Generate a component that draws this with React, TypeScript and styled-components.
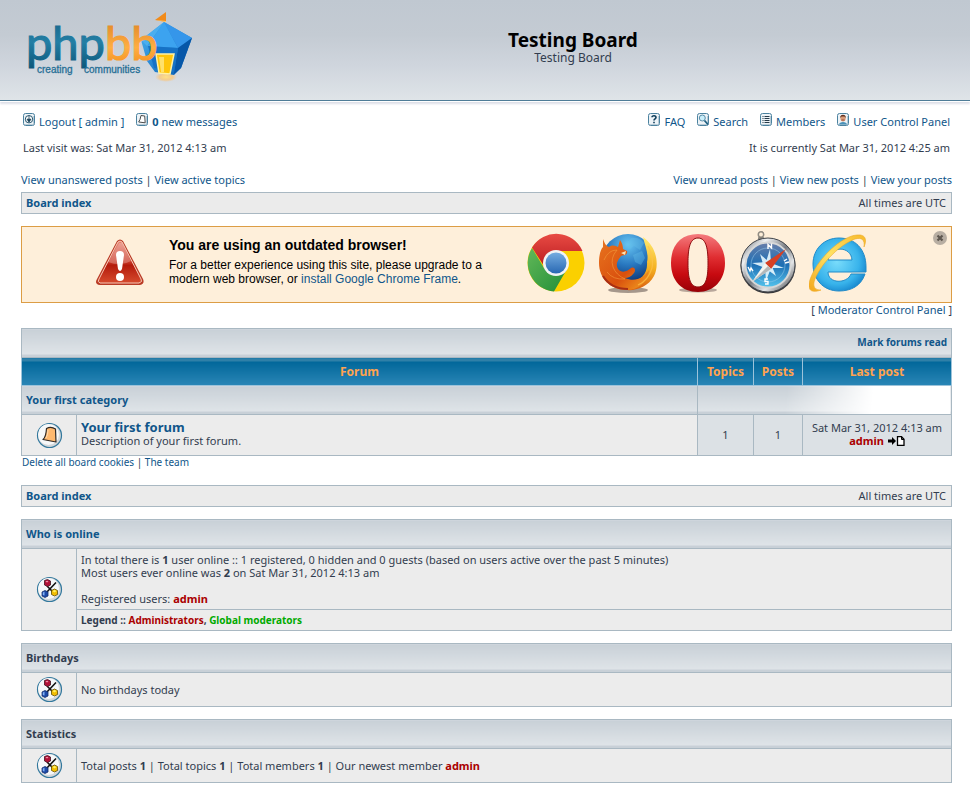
import React from "react";
import styled, { createGlobalStyle, css } from "styled-components";

const LINE = "#a9b8c2";
const LINK = "#10568a";

const GlobalStyle = createGlobalStyle`
  * { box-sizing: border-box; }
  body {
    margin: 0;
    background: #fff;
    color: #323d4f;
    font-family: "Noto Sans", "Open Sans", sans-serif;
    font-size: 11px;
    line-height: 13px;
  }
  h1, h2, p { margin: 0; }
  svg { display: block; flex: none; }
`;

const Header = styled.header`
  display: flex;
  align-items: center;
  height: 101px;
  padding: 0 18px 4px 26px;
  background: linear-gradient(#c0c8d1, #c4cbd3 35%, #cfd5dd 65%, #dfe4e8);
  border-bottom: 1px solid #4f7d98;
  box-shadow: 0 1px 0 #fff, 0 3px 2px #dddfe8;
`;

const TitleBlock = styled.div`
  flex: 1;
  text-align: center;
`;

const BoardTitle = styled.h1`
  color: #000;
  font-size: 19px;
  line-height: 20px;
`;

const BoardDescription = styled.p`
  font-size: 12px;
  line-height: 16px;
`;

const Content = styled.main`
  padding: 13px 18px 0 21px;
`;

const Row = styled.div<{ $inset?: boolean }>`
  display: flex;
  justify-content: space-between;
  line-height: 16px;
  padding: ${(p) => (p.$inset ? "0 2px" : "0")};
`;

const DateRow = styled(Row)`
  margin: 10px 0 16px;
`;

const SearchRow = styled(Row)`
  margin-bottom: 4px;
`;

const ModeratorRow = styled(Row)`
  justify-content: flex-end;
  line-height: 14px;
`;

const Link = styled.a<{ $strong?: boolean; $color?: string }>`
  color: ${(p) => p.$color ?? LINK};
  font-weight: ${(p) => (p.$strong ? 700 : "inherit")};
  text-decoration: none;
  &:hover { text-decoration: underline; }
`;

const MenuGroup = styled.nav`
  display: flex;
  gap: 12px;
`;

const MenuLink = styled(Link)`
  display: flex;
  gap: 4px;
  svg { margin-top: -1px; }
`;

const Breadcrumb = styled.div`
  display: flex;
  justify-content: space-between;
  align-items: center;
  height: 22px;
  padding: 0 5px 2px 4px;
  border: 1px solid ${LINE};
  background: #ebebeb;
`;

const Banner = styled.aside`
  position: relative;
  display: flex;
  align-items: center;
  margin-top: 12px;
  height: 77px;
  padding: 0 0 4px 73px;
  border: 1px solid #dc9d45;
  background: #feefda;
  color: #000;
  font-family: "Liberation Sans", Arial, sans-serif;
`;

const BannerText = styled.div`
  flex: none;
  width: 382px;
  padding: 0 0 2px 24px;
  font-size: 12px;
  line-height: 14px;
`;

const BannerTitle = styled.h2`
  font-size: 14px;
  line-height: 16px;
  margin-bottom: 5px;
`;

const BannerMessage = styled.p`
  width: 324px;
`;

const Browsers = styled.div`
  display: flex;
  align-items: center;
  gap: 13px;
`;

const BrowserLink = styled.a`
  display: block;
`;

const CloseButton = styled.button`
  position: absolute;
  top: 4px;
  right: 4px;
  padding: 0;
  border: 0;
  background: none;
  cursor: pointer;
`;

const Table = styled.table`
  width: 100%;
  table-layout: fixed;
  border-collapse: collapse;
  border: 1px solid ${LINE};
`;

const ForumTable = styled(Table)`
  margin-top: 11px;
`;

const InfoTable = styled(Table)`
  margin-top: 12px;
`;

const Col = styled.col<{ $w?: number }>`
  width: ${(p) => (p.$w ? `${p.$w}px` : "auto")};
`;

const Tr = styled.tr<{ $h: number }>`
  height: ${(p) => p.$h}px;
`;

const barFill = css`
  background: linear-gradient(to top, #c8d0d7 3px, transparent 3px),
    linear-gradient(#c8d0d7, #dfe4e8 90%);
`;

const Bar = styled.th<{ $align?: string; $size?: number }>`
  ${barFill}
  padding: 0 4px 2px;
  border: 1px solid ${LINE};
  text-align: ${(p) => p.$align ?? "left"};
  font-size: ${(p) => p.$size ?? 11}px;
`;

const BarFade = styled.td`
  border: 1px solid ${LINE};
  background: linear-gradient(95deg, transparent 35%, #fff 69%),
    linear-gradient(to top, #c8d0d7 3px, transparent 3px),
    linear-gradient(#c8d0d7, #dfe4e8 90%);
`;

const ColumnHead = styled.th`
  padding: 0;
  border: 1px solid #9cc3da;
  border-top-color: ${LINE};
  background: linear-gradient(#2f80a8 3px, transparent 3px),
    linear-gradient(#006699 10%, #2a86b6);
  color: #ffa34f;
  font-size: 12px;
`;

const Cell = styled.td<{ $shade?: boolean; $center?: boolean }>`
  padding: 0 4px;
  border: 1px solid ${LINE};
  background: ${(p) => (p.$shade ? "#dce1e5" : "#ececec")};
  text-align: ${(p) => (p.$center ? "center" : "left")};
  white-space: nowrap;
  > svg { margin: 0 auto; }
`;

const ForumCell = styled(Cell)`
  padding-bottom: 4px;
`;

const CountCell = styled(Cell)`
  padding-bottom: 2px;
`;

const LegendCell = styled(Cell)`
  font-size: 10px;
  font-weight: 700;
`;

const ForumLink = styled(Link)`
  font-size: 13px;
  line-height: 14px;
`;

const LastPoster = styled.div`
  display: flex;
  justify-content: center;
  align-items: center;
  gap: 4px;
`;

const BottomRow = styled.div`
  margin-bottom: 16px;
  padding-left: 1px;
  font-size: 10px;
  line-height: 13px;
`;

const Logo = () => (
  <svg width="168" height="74" viewBox="26 11 168 74" role="img" aria-label="phpBB creating communities">
    <defs>
      <linearGradient id="lgBlue" x1="0" y1="0" x2="0" y2="1">
        <stop offset="0" stopColor="#175f82" />
        <stop offset=".5" stopColor="#237fa5" />
        <stop offset="1" stopColor="#0b5578" />
      </linearGradient>
      <linearGradient id="lgOrange" x1="0" y1="0" x2="0" y2="1">
        <stop offset="0" stopColor="#d87d20" />
        <stop offset=".6" stopColor="#ffae43" />
        <stop offset="1" stopColor="#f18a16" />
      </linearGradient>
      <linearGradient id="lgBody" x1="0" y1="0" x2="1" y2="1">
        <stop offset="0" stopColor="#4cb6f5" />
        <stop offset="1" stopColor="#055aaf" />
      </linearGradient>
      <radialGradient id="lgGlow">
        <stop offset="0" stopColor="#ffe184" />
        <stop offset=".6" stopColor="#f9c87e" stopOpacity=".8" />
        <stop offset="1" stopColor="#f3c78c" stopOpacity="0" />
      </radialGradient>
    </defs>
    <ellipse cx="166" cy="77" rx="11" ry="5" fill="url(#lgGlow)" />
    <path d="M155 20 166 12 166 22Z" fill="#f18b1a" />
    <path d="M155 20 166 21 166 22Z" fill="#ffcb72" />
    <path d="M141 40 164 22 192 38 181 68 174 75 155 72 147 61Z" fill="url(#lgBody)" />
    <path d="M164 22 147 46 141 40Z" fill="#4aaef0" />
    <path d="M164 22 148 46 178 48Z" fill="#3ca3f0" />
    <path d="M164 22 192 38 178 48Z" fill="#3596ea" />
    <path d="M192 38 178 48 174 74 181 68Z" fill="#0757a8" />
    <path d="M148 46 178 48 174 72 154 68Z" fill="#1672c6" />
    <path d="M156 54H174L170 74 159 73Z" fill="#ffc50b" stroke="#fff2a6" strokeWidth="1.5" />
    <path d="M159 57H164L164 72 161 72Z" fill="#ffe16b" />
    <text x="26" y="60" fontFamily="Lato, sans-serif" fontSize="47" strokeWidth="1.2">
      <tspan fill="url(#lgBlue)" stroke="url(#lgBlue)">php</tspan>
      <tspan fill="url(#lgOrange)" stroke="url(#lgOrange)">bb</tspan>
    </text>
    <g fontFamily="'Liberation Sans', Arial, sans-serif" fontSize="10" fill="#266f96" stroke="#266f96" strokeWidth=".3">
      <text x="37" y="73">creating</text>
      <text x="84" y="73">communities</text>
    </g>
  </svg>
);

const MenuIcon = ({ children }: { children: React.ReactNode }) => (
  <svg width="12" height="13" viewBox="0 0 12 13" aria-hidden="true">
    <rect x=".5" y=".5" width="11" height="12" rx="2" fill="#edf3f7" stroke="#4b829f" />
    <path d="M2 11.5H10M10.5 3V11" stroke="#b8cbd7" />
    {children}
  </svg>
);

const LogoutIcon = () => (
  <MenuIcon>
    <circle cx="6" cy="6.2" r="3.7" fill="#fff" stroke="#25546c" />
    <path d="M6 3V7M4 6.2H8L6 9Z" fill="#163f57" stroke="#163f57" strokeWidth=".8" />
  </MenuIcon>
);
const MessageIcon = () => (
  <MenuIcon>
    <path d="M5 2.5 8.7 3 9.2 9.8 2.7 9 4 6.5Z" fill="#fff" stroke="#4b4b4b" strokeLinejoin="round" />
  </MenuIcon>
);
const FaqIcon = () => (
  <MenuIcon>
    <path d="M4 4.2C4 2.3 8 2.3 8 4.5 8 6 6 5.8 6 7.6M6 8.8V10.2" fill="none" stroke="#103f5c" strokeWidth="1.6" />
  </MenuIcon>
);
const SearchIcon = () => (
  <MenuIcon>
    <circle cx="5.3" cy="5" r="3" fill="#c9eefa" stroke="#5b8ea9" />
    <path d="M7.5 7.5 11 11.5" stroke="#1e5f80" strokeWidth="1.8" />
  </MenuIcon>
);
const MembersIcon = () => (
  <MenuIcon>
    <path d="M2.5 3.5H3.5M4.5 3.5H9.5M2.5 5.5H3.5M4.5 5.5H9.5M2.5 7.5H3.5M4.5 7.5H9.5M2.5 9.5H3.5M4.5 9.5H9.5" stroke="#263b49" />
  </MenuIcon>
);
const UserIcon = () => (
  <MenuIcon>
    <path d="M2 11.5C2 8 10 8 10 11.5Z" fill="#4a91b8" />
    <ellipse cx="6" cy="5.3" rx="2.6" ry="3.2" fill="#d89b78" />
    <path d="M3.2 5C2.8 .8 9.2 .8 8.8 5L7.5 3.5H4.5Z" fill="#623220" />
    <path d="M4.5 7H7.5" stroke="#9b4d3b" />
  </MenuIcon>
);

const WarningIcon = () => (
  <svg width="50" height="47" viewBox="0 0 50 47" role="img" aria-label="Warning">
    <defs>
      <linearGradient id="warn" x1="0" y1="0" x2="0" y2="1">
        <stop offset="0" stopColor="#e88473" />
        <stop offset=".5" stopColor="#c83827" />
        <stop offset=".58" stopColor="#b41b0c" />
        <stop offset="1" stopColor="#d64a2d" />
      </linearGradient>
    </defs>
    <path d="M22 2Q25-1 28 2L48 40Q50 45 45 46H5Q-1 45 2 40Z" fill="#b93a25" />
    <path d="M23 3Q25 1 27 3L46 40Q48 43 44 44H5Q2 43 4 40Z" fill="url(#warn)" stroke="#f6c9b7" />
    <path d="M24 4 13 23Q26 28 36 22L27 4Z" fill="#fff" opacity=".25" />
    <path d="M21 16Q21 12 25 12T29 16L27 30Q25 34 23 30Z" fill="#fff" />
    <circle cx="25" cy="38" r="4" fill="#fff" />
  </svg>
);

const ChromeIcon = () => (
  <svg width="58" height="60" viewBox="0 0 58 60" role="img" aria-label="Google Chrome">
    <defs>
      <linearGradient id="chR" x1="0" y1="0" x2="0" y2="1"><stop stopColor="#e84a43" /><stop offset="1" stopColor="#bc1e22" /></linearGradient>
      <linearGradient id="chG" x1="0" y1="0" x2="1" y2="1"><stop stopColor="#62b858" /><stop offset="1" stopColor="#218e38" /></linearGradient>
      <linearGradient id="chB" x1="0" y1="0" x2="0" y2="1"><stop stopColor="#75ace0" /><stop offset="1" stopColor="#2868b3" /></linearGradient>
    </defs>
    <circle cx="29" cy="30" r="28.5" fill="#fbd000" />
    <path d="M5 15A28.5 28.5 0 0 0 27 58.4L40 36 29 30 17 35Z" fill="url(#chG)" />
    <path d="M5 14.5A28.5 28.5 0 0 1 55.5 18H29A12 12 0 0 0 17 33Z" fill="url(#chR)" />
    <circle cx="29" cy="30" r="13" fill="#f2f3f4" />
    <circle cx="29" cy="30" r="10.5" fill="url(#chB)" />
  </svg>
);

const FirefoxIcon = () => (
  <svg width="60" height="62" viewBox="0 0 60 62" role="img" aria-label="Firefox">
    <defs>
      <radialGradient id="ffB" cx=".5" cy=".2" r=".8"><stop stopColor="#68c6f3" /><stop offset=".5" stopColor="#2877bf" /><stop offset="1" stopColor="#092a67" /></radialGradient>
      <linearGradient id="ffO" x1="0" y1="0" x2="1" y2="1"><stop stopColor="#e8741f" /><stop offset=".6" stopColor="#d9500e" /><stop offset="1" stopColor="#f5a723" /></linearGradient>
      <linearGradient id="ffY" x1="0" y1="0" x2="0" y2="1"><stop stopColor="#ffec72" /><stop offset=".6" stopColor="#f4b020" /><stop offset="1" stopColor="#d95d10" /></linearGradient>
    </defs>
    <ellipse cx="30" cy="58" rx="20" ry="3" fill="#a5978b" />
    <circle cx="30" cy="28" r="26" fill="url(#ffB)" />
    <path d="M33 6Q42 5 46 11L42 18 36 14 31 18 28 12ZM35 23 44 19 47 26 43 33 37 30Z" fill="#65bde9" opacity=".4" />
    <path d="M45 5C60 16 61 34 56 44C50 55 38 59 28 58L30 49C42 50 50 42 49 30C51 22 47 14 45 5Z" fill="url(#ffY)" />
    <path d="M5 7C7 12 8 14 11 15C15 12 18 14 20 15L22 8C25 12 25 16 25 17L29 19C30 23 26 23 23 24C20 28 17 32 20 37C24 42 30 39 33 36C37 34 38 39 36 41C33 45 30 46 27 46C36 50 46 47 51 38C49 51 40 58 29 58C12 58 1 46 1 31C1 22 3 17 5 15Z" fill="url(#ffO)" />
    <path d="M50 14Q56 25 54 36 50 49 40 53" fill="none" stroke="#ffc24c" strokeWidth="1.2" opacity=".7" />
    <path d="M6 28Q10 18 19 18 12 26 15 35 18 43 27 47 15 48 9 40" fill="none" stroke="#f39a3c" opacity=".6" />
    <path d="M23 21 28 19 27 23Z" fill="#fce4b5" />
    <path d="M5 44Q13 57 30 57" fill="none" stroke="#a72e15" strokeWidth="2" />
  </svg>
);

const OperaIcon = () => (
  <svg width="54" height="60" viewBox="0 0 54 60" role="img" aria-label="Opera">
    <defs>
      <linearGradient id="opR" x1="0" y1="0" x2="0" y2="1"><stop stopColor="#f47b7e" /><stop offset=".4" stopColor="#e02e32" /><stop offset=".7" stopColor="#c70a10" /><stop offset="1" stopColor="#970006" /></linearGradient>
    </defs>
    <ellipse cx="27" cy="57" rx="19" ry="2.5" fill="#b8a79b" />
    <path fillRule="evenodd" d="M27 1C44 1 54 13 54 30S43 59 27 59 0 48 0 30 10 1 27 1ZM27 5C18 5 17 18 17 30S18 54 27 54 37 42 37 30 36 5 27 5Z" fill="url(#opR)" />
    <path d="M27 5C18 5 17 18 17 30S18 54 27 54 37 42 37 30 36 5 27 5Z" fill="none" stroke="#8d0d10" />
  </svg>
);

const SafariIcon = () => (
  <svg width="58" height="64" viewBox="-2 -4 58 64" role="img" aria-label="Safari">
    <defs>
      <linearGradient id="saM" x1="0" y1="0" x2="1" y2="1"><stop stopColor="#50545b" /><stop offset=".25" stopColor="#eef0f2" /><stop offset=".5" stopColor="#777b81" /><stop offset=".7" stopColor="#e5e7e9" /><stop offset="1" stopColor="#25272b" /></linearGradient>
      <linearGradient id="saB" x1="0" y1="0" x2="0" y2="1"><stop stopColor="#687eaa" /><stop offset=".5" stopColor="#1e6fb4" /><stop offset="1" stopColor="#55c4ed" /></linearGradient>
    </defs>
    <circle cx="21" cy="-.5" r="2.7" fill="none" stroke="#908b82" strokeWidth="1.5" />
    <rect x="18" y="2" width="6" height="3" rx="1" fill="#88847c" />
    <circle cx="28" cy="31" r="27.5" fill="#36373a" />
    <circle cx="28" cy="30" r="27" fill="url(#saM)" stroke="#42464c" />
    <circle cx="28" cy="30" r="22.5" fill="url(#saB)" stroke="#d6d7d7" strokeWidth="2" />
    <circle cx="28" cy="30" r="17" fill="none" stroke="#9fd2ef" opacity=".5" />
    <path d="M30 14 31 28 44 33 31 33 26 46 25 33 12 28 26 27ZM20 19 31 29 36 41 24 32Z" fill="#e8f8ff" opacity=".9" />
    <path d="M46 14 31 34 25 28Z" fill="#d64024" />
    <path d="M12 47 25 28 31 34Z" fill="#f5f4ef" />
    <path d="M12 47 28 31 31 34Z" fill="#b4b8ba" />
    <g fill="none" stroke="#fff" strokeWidth="1.4">
      <path d="M28 14V9.500L31.500 13V8.500M25 49H28V46.500H25V44H28M44 26 47 24M45 28 49 27M8 32 10 36 11 33 13 36" />
    </g>
  </svg>
);

const ExplorerIcon = () => (
  <svg width="60" height="60" viewBox="1 0 60 60" role="img" aria-label="Internet Explorer">
    <defs>
      <radialGradient id="ieB" cx=".45" cy=".45" r=".6"><stop stopColor="#79dcfb" /><stop offset=".7" stopColor="#38b3eb" /><stop offset="1" stopColor="#1686ce" /></radialGradient>
      <linearGradient id="ieY" x1="0" y1="1" x2="1" y2="0"><stop stopColor="#f3a71c" /><stop offset=".5" stopColor="#ffe264" /><stop offset="1" stopColor="#f7b92b" /></linearGradient>
    </defs>
    <path fillRule="evenodd" d="M31 5C47 5 58 16 58 34V39H20C20 51 39 51 43 41H57C53 53 43 58 31 58 15 58 5 46 5 31S16 5 31 5ZM20 27H44C43 12 21 13 20 27Z" fill="url(#ieB)" stroke="#218bc9" />
    <path d="M56 14C59 7 58 1 49 2 34 3 11 24 3 44-2 56 2 61 13 57 7 57 4 54 7 46 14 29 33 11 47 6 54 4 57 7 56 14Z" fill="url(#ieY)" stroke="#edaa25" strokeWidth=".6" />
  </svg>
);

const CloseIcon = () => (
  <svg width="14" height="14" viewBox="0 0 14 14" aria-hidden="true">
    <circle cx="7" cy="7" r="7" fill="#b8aea2" />
    <path d="M4.500 4.500 9.500 9.500M9.500 4.500 4.500 9.500" stroke="#5e574f" strokeWidth="2.2" />
  </svg>
);

const Disc = ({ children }: { children: React.ReactNode }) => (
  <svg width="27" height="27" viewBox="0 0 27 27" aria-hidden="true">
    <circle cx="13.500" cy="13.500" r="12" fill="#d3d7da" stroke="#32789d" strokeWidth="1.2" />
    <circle cx="12.500" cy="12.500" r="10.500" fill="#f6f8f9" />
    {children}
  </svg>
);

const TopicIcon = () => (
  <Disc>
    <path d="M10.500 6.500Q15 4 19.500 7L20 20 7 17.500Q10 15 10.500 6.500Z" fill="#ffb96f" stroke="#302a26" strokeWidth="1.2" strokeLinejoin="round" />
    <path d="M10 16Q12 13 12 8" fill="none" stroke="#ffdcb0" />
  </Disc>
);

const CubesIcon = () => (
  <Disc>
    <path d="M20 6.500 9.500 17.500M11 10 17 16" stroke="#111" strokeWidth="1.6" />
    <path d="M8.500 4.500 11.500 3.500 14.500 5V9L11.500 10.500 8.500 9Z" fill="#b01238" stroke="#42121f" strokeWidth=".8" />
    <path d="M9.500 5.500 11 4.700 12.500 5.500 11 6.500Z" fill="#f295aa" />
    <path d="M6 16 9 14.500 12 16V20L9 21.500 6 20Z" fill="#1d4aa8" stroke="#142d6a" strokeWidth=".8" />
    <path d="M6.800 16.500 8.500 15.800V19.500L6.800 19Z" fill="#82b2f4" />
    <path d="M15.500 14.500 18.500 13 21.500 14.500V18.500L18.500 20 15.500 18.500Z" fill="#f2bd00" stroke="#604b00" strokeWidth=".8" />
    <path d="M16.500 15 18.500 14 20.500 15 18.500 16.500Z" fill="#fff266" />
  </Disc>
);

const LatestPostIcon = () => (
  <svg width="17" height="10" viewBox="0 0 17 10" role="img" aria-label="View the latest post">
    <path d="M0 3.500H4V1L8 5 4 9V6.500H0Z" fill="#000" />
    <path d="M9.500 .7H13.500L16 3.300V9.300H9.500Z" fill="#fff" stroke="#000" strokeWidth="1.3" />
    <path d="M13.500 .7V3.500H16" fill="none" stroke="#000" />
  </svg>
);

const browsers = [ChromeIcon, FirefoxIcon, OperaIcon, SafariIcon, ExplorerIcon];

const Crumbs = () => (
  <Breadcrumb>
    <Link href="#" $strong>Board index</Link>
    <span>All times are UTC</span>
  </Breadcrumb>
);

const Admin = () => <Link href="#" $strong $color="#aa0000">admin</Link>;

const IconColumns = () => (
  <colgroup>
    <Col $w={55} />
    <Col />
  </colgroup>
);

export default function App() {
  return (
    <>
      <GlobalStyle />
      <Header>
        <Link href="#"><Logo /></Link>
        <TitleBlock>
          <BoardTitle>Testing Board</BoardTitle>
          <BoardDescription>Testing Board</BoardDescription>
        </TitleBlock>
      </Header>
      <Content>
        <Row $inset>
          <MenuGroup>
            <MenuLink href="#"><LogoutIcon />Logout [ admin ]</MenuLink>
            <MenuLink href="#"><MessageIcon /><span><b>0</b> new messages</span></MenuLink>
          </MenuGroup>
          <MenuGroup>
            <MenuLink href="#"><FaqIcon />FAQ</MenuLink>
            <MenuLink href="#"><SearchIcon />Search</MenuLink>
            <MenuLink href="#"><MembersIcon />Members</MenuLink>
            <MenuLink href="#"><UserIcon />User Control Panel</MenuLink>
          </MenuGroup>
        </Row>
        <DateRow $inset>
          <span>Last visit was: Sat Mar 31, 2012 4:13 am</span>
          <span>It is currently Sat Mar 31, 2012 4:25 am</span>
        </DateRow>
        <SearchRow>
          <span><Link href="#">View unanswered posts</Link> | <Link href="#">View active topics</Link></span>
          <span><Link href="#">View unread posts</Link> | <Link href="#">View new posts</Link> | <Link href="#">View your posts</Link></span>
        </SearchRow>
        <Crumbs />

        <Banner>
          <WarningIcon />
          <BannerText>
            <BannerTitle>You are using an outdated browser!</BannerTitle>
            <BannerMessage>
              For a better experience using this site, please upgrade to a modern web browser, or{" "}
              <Link href="#">install Google Chrome Frame</Link>.
            </BannerMessage>
          </BannerText>
          <Browsers>
            {browsers.map((Icon, i) => <BrowserLink href="#" key={i}><Icon /></BrowserLink>)}
          </Browsers>
          <CloseButton type="button" aria-label="Close"><CloseIcon /></CloseButton>
        </Banner>
        <ModeratorRow>
          <span>[ <Link href="#">Moderator Control Panel</Link> ]</span>
        </ModeratorRow>

        <ForumTable>
          <colgroup>
            <Col $w={55} />
            <Col />
            <Col $w={56} />
            <Col $w={49} />
            <Col $w={149} />
          </colgroup>
          <tbody>
            <Tr $h={29}>
              <Bar colSpan={5} $align="right" $size={10}><Link href="#">Mark forums read</Link></Bar>
            </Tr>
            <Tr $h={28}>
              <ColumnHead colSpan={2}>Forum</ColumnHead>
              <ColumnHead>Topics</ColumnHead>
              <ColumnHead>Posts</ColumnHead>
              <ColumnHead>Last post</ColumnHead>
            </Tr>
            <Tr $h={29}>
              <Bar colSpan={2}><Link href="#">Your first category</Link></Bar>
              <BarFade colSpan={3} />
            </Tr>
            <Tr $h={41}>
              <Cell $center><TopicIcon /></Cell>
              <ForumCell>
                <ForumLink href="#" $strong>Your first forum</ForumLink>
                <p>Description of your first forum.</p>
              </ForumCell>
              <CountCell $shade $center>1</CountCell>
              <CountCell $shade $center>1</CountCell>
              <CountCell $shade $center>
                <p>Sat Mar 31, 2012 4:13 am</p>
                <LastPoster><Admin /><Link href="#"><LatestPostIcon /></Link></LastPoster>
              </CountCell>
            </Tr>
          </tbody>
        </ForumTable>
        <BottomRow>
          <Link href="#">Delete all board cookies</Link> | <Link href="#">The team</Link>
        </BottomRow>
        <Crumbs />

        <InfoTable>
          <IconColumns />
          <tbody>
            <Tr $h={29}><Bar colSpan={2}><Link href="#">Who is online</Link></Bar></Tr>
            <Tr $h={61}>
              <Cell $center rowSpan={2}><CubesIcon /></Cell>
              <Cell>
                <p>In total there is <b>1</b> user online :: 1 registered, 0 hidden and 0 guests (based on users active over the past 5 minutes)</p>
                <p>Most users ever online was <b>2</b> on Sat Mar 31, 2012 4:13 am</p>
                <br />
                <p>Registered users: <Admin /></p>
              </Cell>
            </Tr>
            <Tr $h={21}>
              <LegendCell>
                Legend :: <Link href="#" $color="#aa0000">Administrators</Link>, <Link href="#" $color="#00aa00">Global moderators</Link>
              </LegendCell>
            </Tr>
          </tbody>
        </InfoTable>
        <InfoTable>
          <IconColumns />
          <tbody>
            <Tr $h={29}><Bar colSpan={2}>Birthdays</Bar></Tr>
            <Tr $h={34}>
              <Cell $center><CubesIcon /></Cell>
              <Cell>No birthdays today</Cell>
            </Tr>
          </tbody>
        </InfoTable>
        <InfoTable>
          <IconColumns />
          <tbody>
            <Tr $h={29}><Bar colSpan={2}>Statistics</Bar></Tr>
            <Tr $h={34}>
              <Cell $center><CubesIcon /></Cell>
              <Cell>Total posts <b>1</b> | Total topics <b>1</b> | Total members <b>1</b> | Our newest member <Admin /></Cell>
            </Tr>
          </tbody>
        </InfoTable>
      </Content>
    </>
  );
}
